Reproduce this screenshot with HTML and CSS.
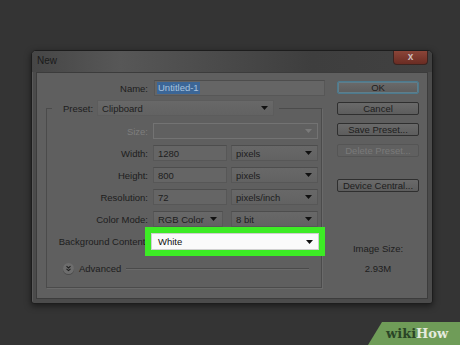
FILE: index.html
```html
<!DOCTYPE html>
<html lang="en">
<head>
  <meta charset="UTF-8">
  <title>New</title>
  <link rel="stylesheet" href="styles.css">
</head>
<body>
  <!-- Dialog -->
  <div class="dialog">
    <div class="titlebar">
      <span class="title">New</span>
      <span class="close">x</span>
    </div>

    <div class="panel">
      <div class="form">
        <div class="row name-row">
          <span class="lbl">Name:</span>
          <div class="field name-field"><span class="selected">Untitled-1</span></div>
        </div>

        <fieldset class="group">
          <legend class="preset">
            <span class="preset-lbl">Preset:</span>
            <div class="field select preset-select">
              <span class="val">Clipboard</span>
              <svg class="arrow" width="7" height="4" viewBox="0 0 7 4"><path d="M0 0h7L3.5 4z"/></svg>
            </div>
          </legend>

          <div class="row first">
            <span class="lbl off">Size:</span>
            <div class="field select size-select off">
              <span class="val"></span>
              <svg class="arrow" width="7" height="4" viewBox="0 0 7 4"><path d="M0 0h7L3.5 4z"/></svg>
            </div>
          </div>

          <div class="row">
            <span class="lbl">Width:</span>
            <div class="field num">1280</div>
            <div class="field select unit">
              <span class="val">pixels</span>
              <svg class="arrow" width="7" height="4" viewBox="0 0 7 4"><path d="M0 0h7L3.5 4z"/></svg>
            </div>
          </div>

          <div class="row">
            <span class="lbl">Height:</span>
            <div class="field num">800</div>
            <div class="field select unit">
              <span class="val">pixels</span>
              <svg class="arrow" width="7" height="4" viewBox="0 0 7 4"><path d="M0 0h7L3.5 4z"/></svg>
            </div>
          </div>

          <div class="row">
            <span class="lbl">Resolution:</span>
            <div class="field num">72</div>
            <div class="field select unit">
              <span class="val">pixels/inch</span>
              <svg class="arrow" width="7" height="4" viewBox="0 0 7 4"><path d="M0 0h7L3.5 4z"/></svg>
            </div>
          </div>

          <div class="row">
            <span class="lbl">Color Mode:</span>
            <div class="field select mode">
              <span class="val">RGB Color</span>
              <svg class="arrow" width="7" height="4" viewBox="0 0 7 4"><path d="M0 0h7L3.5 4z"/></svg>
            </div>
            <div class="field select unit bits">
              <span class="val">8 bit</span>
              <svg class="arrow" width="7" height="4" viewBox="0 0 7 4"><path d="M0 0h7L3.5 4z"/></svg>
            </div>
          </div>

          <div class="row bg-row">
            <span class="lbl wide">Background Content:</span>
            <div class="field select bg-select">
              <span class="val">White</span>
              <svg class="arrow" width="7" height="4" viewBox="0 0 7 4"><path d="M0 0h7L3.5 4z"/></svg>
            </div>
          </div>

          <div class="advanced">
            <span class="adv-icon">
              <svg width="11" height="11" viewBox="0 0 11 11"><path d="M3.5 3.2l2 1.8 2-1.8M3.5 5.8l2 1.8 2-1.8" fill="none" stroke="#1e1e1e" stroke-width="1.1"/></svg>
            </span>
            <span class="adv-text">Advanced</span>
            <span class="adv-line"></span>
          </div>
        </fieldset>
      </div>

      <div class="buttons">
        <div class="btn ok">OK</div>
        <div class="btn">Cancel</div>
        <div class="btn">Save Preset...</div>
        <div class="btn off">Delete Preset...</div>
        <div class="btn device">Device Central...</div>
        <div class="info">Image Size:</div>
        <div class="info">2.93M</div>
      </div>
    </div>
  </div>

  <!-- Badge -->
  <div class="wikihow"><span class="wiki">wiki</span><span class="how">How</span></div>
</body>
</html>
```

FILE: styles.css
```css
body {
  margin: 0;
  height: 345px;
  box-sizing: border-box;
  padding: 50px 0 0 31px;
  background: #343434;
  font-family: "Liberation Sans", Arial, sans-serif;
  font-size: 9.5px;
  color: #1d1d1d;
  position: relative;
  overflow: hidden;
}

.dialog {
  width: 402px;
  height: 254px;
  box-sizing: border-box;
  border: 1px solid #1d1d1d;
  border-radius: 5px 5px 3px 3px;
  background: #4b4b4b;
  box-shadow: 0 2px 6px rgba(0, 0, 0, 0.5), inset 1px 1px 0 #5a5a5a;
  display: flex;
  flex-direction: column;
}

.titlebar {
  height: 21px;
  display: flex;
  justify-content: space-between;
  align-items: flex-start;
  border-radius: 4px 4px 0 0;
  background: linear-gradient(90deg, #464646 0%, #575757 22%, #4b4b4b 45%, #3e3e3e 70%, #414141 100%);
}

.title {
  padding: 4px 0 0 5px;
  font-size: 10px;
  line-height: 12px;
  color: #1a1a1a;
}

.close {
  width: 35px;
  height: 14px;
  box-sizing: border-box;
  margin-right: 4px;
  border: 1px solid #3b2420;
  border-top: none;
  border-radius: 0 0 4px 4px;
  background: linear-gradient(#8b4538, #6a2c23);
  color: #cdbfbc;
  font-weight: bold;
  font-size: 10px;
  line-height: 11px;
  text-align: center;
}

.panel {
  flex: 1;
  margin: 0 4px 4px;
  background: #5f5f5f;
  border: 1px solid #3c3c3c;
  display: flex;
}

.form {
  width: 279px;
  padding: 7px 0 0 9px;
}

/* form rows */
.row {
  display: flex;
  align-items: center;
  height: 16px;
  margin-top: 6px;
}

.row.first { margin-top: 7px; }

.name-row { margin-top: 0; }

.lbl {
  width: 101px;
  margin-right: 5px;
  text-align: right;
  white-space: nowrap;
}

.name-row .lbl {
  width: 102px;
  margin-right: 6px;
}

.lbl.off { color: #7e7e7e; }

.field {
  height: 16px;
  box-sizing: border-box;
  display: flex;
  align-items: center;
  padding: 0 4px;
  background: #656565;
  border: 1px solid #575757;
  border-top-color: #4d4d4d;
  white-space: nowrap;
}

.name-field {
  width: 171px;
  padding-left: 2px;
}

.selected {
  background: #3c6696;
  color: #a7c2dd;
  padding: 0 1px;
  line-height: 12px;
}

.select .val { flex: 1; }

.arrow { fill: #111; margin-right: 1px; }

.select { background: linear-gradient(#686868, #626262); }

/* preset group */
.group {
  margin: 4px 0 0;
  padding: 0 0 13px;
  width: 276px;
  min-width: 0;
  box-sizing: border-box;
  border: 1px solid #4b4b4b;
  box-shadow: 1px 1px 0 #6a6a6a;
}

.preset {
  display: flex;
  align-items: center;
  height: 16px;
  margin-left: 5px;
  padding: 0 5px 0 11px;
}

.preset-lbl { margin-right: 4px; }

.preset-select {
  width: 177px;
  border-color: #5c5c5c;
}

.size-select {
  width: 165px;
  background: #606060;
  border-color: #737373;
}

.size-select .arrow { fill: #7a7a7a; }

.num { width: 74px; }

.unit {
  width: 87px;
  margin-left: 4px;
}

.mode { width: 70px; }

.bits { margin-left: 8px; }

.bg-row { height: 17px; }

.bg-select {
  width: 168px;
  height: 17px;
  margin-left: -2px;
  padding-left: 6px;
  background: #fafafa;
  border: 1px solid #cfcfcf;
  outline: 6px solid #3deb25;
  color: #111;
}

.advanced {
  display: flex;
  align-items: center;
  height: 11px;
  margin-top: 13px;
  padding-left: 16px;
}

.adv-icon {
  width: 11px;
  height: 11px;
  border-radius: 50%;
  background: #6d6d6d;
  box-shadow: 0 1px 0 #4a4a4a;
  display: flex;
}

.adv-text { margin-left: 5px; }

.adv-line {
  flex: 1;
  margin: 0 12px 0 5px;
  border-top: 1px solid #4a4a4a;
  border-bottom: 1px solid #6a6a6a;
}

/* right column */
.buttons {
  width: 82px;
  margin-left: 12px;
  padding-top: 8px;
  display: flex;
  flex-direction: column;
  gap: 8px;
}

.btn {
  height: 13px;
  box-sizing: border-box;
  border: 1px solid #2f2f2f;
  border-radius: 2px;
  background: linear-gradient(#6a6a6a, #5d5d5d);
  text-align: center;
  line-height: 11px;
  white-space: nowrap;
}

.btn.ok {
  border-color: #4c7a8e;
  box-shadow: inset 0 0 0 1px #5f7e8b;
}

.btn.off {
  color: #7a7a7a;
  border-color: #555;
  background: #606060;
}

.btn.device { margin-top: 14px; }

.info {
  text-align: center;
  line-height: 12px;
}

.info:nth-of-type(6) { margin-top: 43px; }

/* wikiHow badge */
.wikihow {
  position: absolute;
  right: 0;
  bottom: 0;
  width: 92px;
  height: 23px;
  box-sizing: border-box;
  padding-left: 18px;
  background: #6f9c58;
  clip-path: polygon(14px 0, 100% 0, 100% 100%, 0 100%);
  font-family: "DejaVu Serif", "Liberation Serif", serif;
  font-weight: bold;
  font-size: 13px;
  line-height: 23px;
}

.wiki { color: #2a4526; }

.how { color: #e4ebde; }
```
